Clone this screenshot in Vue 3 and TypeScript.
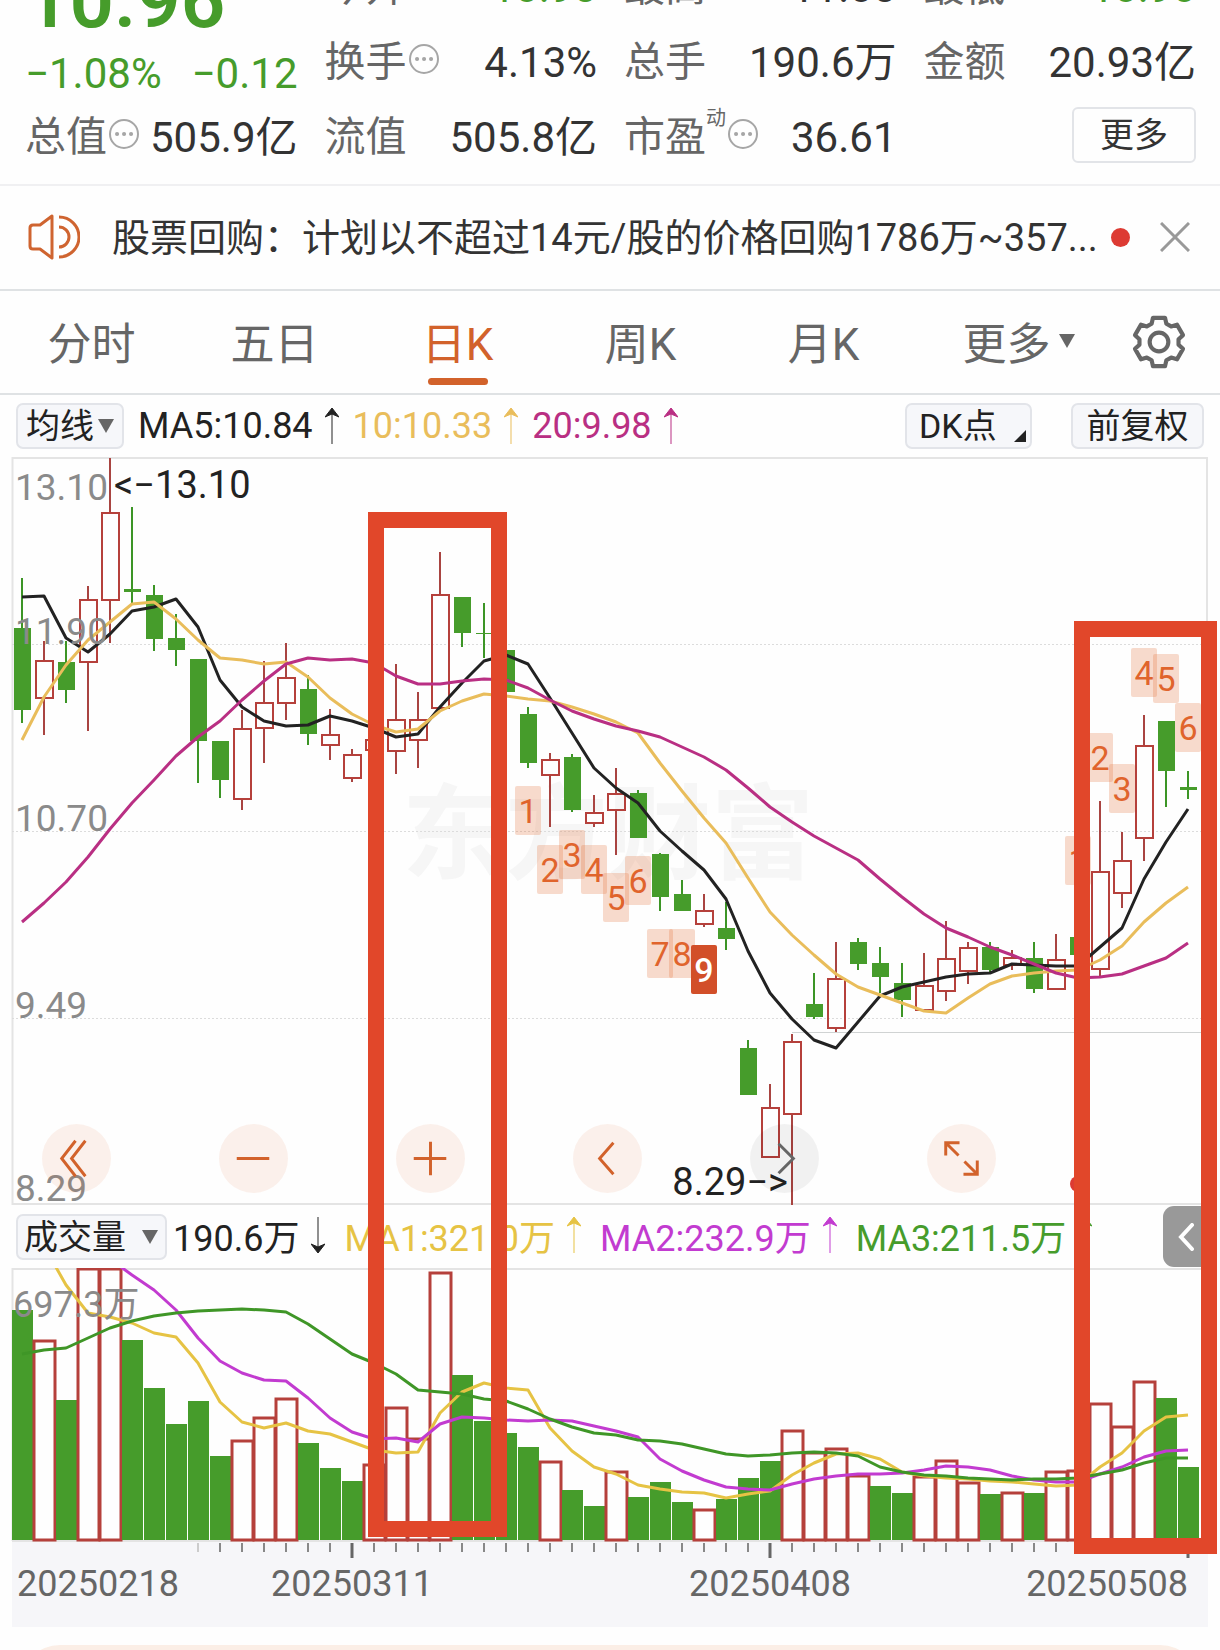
<script setup lang="ts">
import { ref } from 'vue'

type Candle = [kind: 'r' | 'g', high: number, top: number, bottom: number, low: number]

const W = 1220
const STEP = 22
const xAt = (i: number): number => 22 + STEP * i

const candles: Candle[] = [
  ['g', 578, 628, 710, 723], ['r', 641, 661, 698, 735], ['g', 641, 662, 690, 703], ['r', 586, 600, 662, 731],
  ['r', 458, 513, 600, 643], ['g', 507, 589, 592, 603], ['g', 585, 595, 639, 651], ['g', 614, 638, 650, 666],
  ['g', 659, 659, 741, 783], ['g', 741, 741, 780, 798], ['r', 710, 729, 799, 810], ['r', 661, 703, 728, 763],
  ['r', 643, 678, 703, 720], ['g', 675, 689, 734, 745], ['r', 709, 735, 745, 760], ['r', 749, 755, 778, 782],
  ['r', 739, 740, 750, 750], ['r', 664, 720, 751, 774], ['r', 692, 720, 740, 768], ['r', 552, 595, 708, 708],
  ['g', 597, 597, 633, 647], ['g', 603, 633, 634, 658], ['g', 650, 650, 692, 692], ['g', 707, 714, 763, 768],
  ['r', 753, 760, 775, 827], ['g', 754, 757, 810, 812], ['r', 795, 813, 823, 827], ['r', 768, 794, 810, 855],
  ['g', 790, 793, 838, 838], ['g', 853, 854, 897, 911], ['g', 880, 894, 911, 911], ['r', 894, 911, 924, 927],
  ['g', 902, 928, 939, 950], ['g', 1040, 1048, 1095, 1095], ['r', 1084, 1108, 1157, 1157], ['r', 1034, 1042, 1114, 1205],
  ['g', 973, 1004, 1017, 1019], ['r', 942, 979, 1028, 1032], ['g', 938, 942, 964, 970], ['g', 947, 963, 977, 993],
  ['g', 963, 983, 1000, 1017], ['r', 953, 986, 1010, 1010], ['r', 921, 959, 991, 1001], ['r', 942, 948, 971, 984],
  ['g', 942, 947, 970, 973], ['r', 950, 958, 965, 970], ['g', 942, 958, 989, 993], ['r', 934, 960, 989, 989],
  ['g', 937, 937, 955, 955], ['r', 801, 872, 969, 977], ['r', 832, 861, 893, 908], ['r', 715, 746, 838, 861],
  ['g', 721, 721, 771, 807], ['g', 771, 787, 790, 799],
]

const volumeTops: number[] = [
  1310, 1341, 1400, 1269, 1269, 1340, 1388, 1424, 1401, 1456, 1441, 1418, 1399, 1443, 1468, 1481, 1465, 1408,
  1439, 1273, 1375, 1421, 1433, 1447, 1462, 1490, 1506, 1472, 1497, 1482, 1502, 1510, 1499, 1478, 1461, 1431,
  1453, 1449, 1476, 1486, 1493, 1477, 1461, 1483, 1494, 1493, 1493, 1472, 1471, 1404, 1427, 1382, 1398, 1467,
]
// Volume bars are coloured by the day-on-day move, so they can differ from the candle above.
const fallingVolume = new Set([
  0, 2, 5, 6, 7, 8, 9, 13, 14, 15, 20, 21, 22, 23, 25, 26, 28, 29, 30, 32, 33, 34, 39, 40, 44, 46, 52, 53,
])

const ma5 = [
  597, 596, 638, 652, 634, 611, 607, 599, 627, 680, 707, 721, 726, 725, 716, 721, 728, 737, 734, 707, 683, 661,
  655, 664, 698, 733, 768, 788, 803, 831, 851, 870, 899, 951, 993, 1019, 1040, 1048, 1022, 996, 987, 982, 977,
  974, 973, 964, 965, 966, 966, 947, 928, 879, 842, 809,
]
const ma10 = [
  740, 697, 665, 640, 622, 604, 602, 619, 640, 658, 660, 664, 662, 677, 698, 714, 725, 732, 729, 711, 701, 694,
  696, 699, 701, 707, 714, 722, 733, 763, 791, 818, 843, 878, 912, 935, 955, 974, 987, 995, 1003, 1011, 1013,
  998, 984, 976, 973, 971, 970, 960, 946, 922, 903, 887,
]
const ma20 = [
  922, 903, 882, 857, 829, 803, 780, 756, 737, 721, 700, 681, 664, 658, 660, 659, 663, 676, 684, 684, 681, 679,
  680, 688, 700, 711, 719, 726, 731, 737, 747, 757, 770, 788, 807, 822, 836, 848, 860, 879, 897, 914, 928, 937,
  947, 955, 964, 973, 978, 977, 974, 966, 958, 943,
]
const volMa1 = [
  1212, 1246, 1285, 1313, 1317, 1323, 1333, 1337, 1363, 1402, 1422, 1428, 1423, 1431, 1434, 1442, 1450, 1453,
  1452, 1413, 1392, 1383, 1388, 1390, 1428, 1451, 1467, 1474, 1485, 1489, 1492, 1493, 1498, 1494, 1491, 1475,
  1463, 1454, 1453, 1459, 1472, 1476, 1478, 1479, 1481, 1482, 1484, 1486, 1485, 1467, 1453, 1431, 1417, 1415,
]
const volMa2 = [
  1200, 1210, 1220, 1230, 1259, 1275, 1290, 1310, 1338, 1361, 1373, 1380, 1381, 1398, 1418, 1432, 1439, 1438,
  1442, 1424, 1417, 1418, 1420, 1421, 1420, 1421, 1426, 1431, 1437, 1459, 1471, 1480, 1487, 1489, 1490, 1484,
  1479, 1476, 1474, 1474, 1473, 1470, 1466, 1467, 1470, 1476, 1480, 1482, 1482, 1474, 1467, 1457, 1451, 1450,
]
const volMa3 = [
  1354, 1350, 1348, 1338, 1328, 1321, 1316, 1313, 1311, 1310, 1309, 1310, 1312, 1324, 1339, 1354, 1363, 1374,
  1390, 1392, 1394, 1399, 1401, 1409, 1419, 1427, 1433, 1435, 1440, 1441, 1444, 1449, 1454, 1456, 1455, 1453,
  1452, 1453, 1456, 1467, 1472, 1475, 1476, 1478, 1479, 1480, 1479, 1479, 1478, 1474, 1470, 1463, 1458, 1458,
]

const line = (ys: number[]): string => ys.map((y, i) => `${xAt(i)},${y}`).join(' ')

const badges: { i: number; y: number; n: number }[] = [
  { i: 23, y: 786, n: 1 }, { i: 24, y: 845, n: 2 }, { i: 25, y: 830, n: 3 }, { i: 26, y: 845, n: 4 },
  { i: 27, y: 873, n: 5 }, { i: 28, y: 856, n: 6 }, { i: 29, y: 929, n: 7 }, { i: 30, y: 929, n: 8 },
  { i: 31, y: 945, n: 9 }, { i: 48, y: 836, n: 1 }, { i: 49, y: 733, n: 2 }, { i: 50, y: 764, n: 3 },
  { i: 51, y: 648, n: 4 }, { i: 52, y: 654, n: 5 }, { i: 53, y: 703, n: 6 },
]

const ticks = candles.map((_, i) => i).filter((i) => i >= 8)
const isMajor = (i: number): boolean => i === 15 || i === 34 || i === 53

const STAGE_TOP = 457
const STAGE_HEIGHT = 1170
const frames = [
  { left: 368, top: 512, width: 139, height: 1025 },
  { left: 1074, top: 621, width: 143, height: 933 },
]
const frameStyle = (f: (typeof frames)[number]) => ({
  left: `${(f.left / W) * 100}%`,
  top: `${((f.top - STAGE_TOP) / STAGE_HEIGHT) * 100}%`,
  width: `${(f.width / W) * 100}%`,
  height: `${(f.height / STAGE_HEIGHT) * 100}%`,
})

const tabs = ['分时', '五日', '日K', '周K', '月K', '更多']
const active = ref('日K')

const gear = Array.from({ length: 6 }, (_, k) => {
  const base = -90 + 60 * k
  return [[19, -22], [24, -14], [24, 14], [19, 22]]
    .map(([r, a]) => {
      const t = ((base + a) * Math.PI) / 180
      return `${(26 + r * Math.cos(t)).toFixed(1)},${(26 + r * Math.sin(t)).toFixed(1)}`
    })
    .join(' ')
}).join(' ')

const tools = [
  { label: '最左', d: 'M34 17 20 35 34 53M44 17 30 35 44 53', gray: false },
  { label: '缩小', d: 'M18 35H51', gray: false },
  { label: '放大', d: 'M18 35H51M35 18V52', gray: false },
  { label: '左移', d: 'M41 19 27 35 41 51', gray: false },
  { label: '右移', d: 'M29 20 44 35 29 50', gray: true },
  { label: '全屏', d: 'M19 32V19H33M19 19 32 32M38 38 51 51M37 51H51V37', gray: false },
]
</script>

<template>
  <main class="page">
    <header class="quote">
      <section class="summary">
        <strong class="price">10.96</strong>
        <div class="change"><span>−1.08%</span><span>−0.12</span></div>
        <div class="cell">
          <span class="name">总值</span>
          <svg class="info" viewBox="0 0 30 30"><circle cx="15" cy="15" r="14" /><path d="M8 15h.1M15 15h.1M22 15h.1" /></svg>
          <span class="value">505.9亿</span>
        </div>
      </section>
      <section class="column">
        <div class="cell"><span class="name">今开</span><span class="value down">10.98</span></div>
        <div class="cell">
          <span class="name">换手</span>
          <svg class="info" viewBox="0 0 30 30"><circle cx="15" cy="15" r="14" /><path d="M8 15h.1M15 15h.1M22 15h.1" /></svg>
          <span class="value">4.13%</span>
        </div>
        <div class="cell"><span class="name">流值</span><span class="value">505.8亿</span></div>
      </section>
      <section class="column">
        <div class="cell"><span class="name">最高</span><span class="value">11.08</span></div>
        <div class="cell"><span class="name">总手</span><span class="value">190.6万</span></div>
        <div class="cell">
          <span class="name">市盈</span><span class="sup">动</span>
          <svg class="info" viewBox="0 0 30 30"><circle cx="15" cy="15" r="14" /><path d="M8 15h.1M15 15h.1M22 15h.1" /></svg>
          <span class="value">36.61</span>
        </div>
      </section>
      <section class="column">
        <div class="cell"><span class="name">最低</span><span class="value down">10.90</span></div>
        <div class="cell"><span class="name">金额</span><span class="value">20.93亿</span></div>
        <div class="cell last"><button class="more" type="button">更多</button></div>
      </section>
    </header>

    <section class="notice">
      <svg class="speaker" viewBox="0 0 52 46">
        <path d="M24 2 12 11H5Q2 11 2 14V32Q2 35 5 35H12L24 44Z" />
        <path d="M31 13A10 10 0 0 1 31 33M31 3A20 20 0 0 1 31 43" />
      </svg>
      <a class="headline" href="#">股票回购：计划以不超过14元/股的价格回购1786万~357...</a>
      <i class="dot"></i>
      <button class="close" type="button" aria-label="关闭">
        <svg viewBox="0 0 30 30"><path d="M1 1 29 29M29 1 1 29" /></svg>
      </button>
    </section>

    <nav class="tabs">
      <button
        v-for="t in tabs"
        :key="t"
        type="button"
        class="tab"
        :class="{ active: t === active, menu: t === '更多' }"
        @click="active = t"
      >
        {{ t }}<svg v-if="t === '更多'" class="caret" viewBox="0 0 16 14"><path d="M0 0H16L8 14Z" /></svg>
      </button>
      <button class="settings" type="button" aria-label="设置">
        <svg viewBox="0 0 52 52"><polygon :points="gear" /><circle cx="26" cy="26" r="9" /></svg>
      </button>
    </nav>

    <section class="legend averages">
      <button class="chip" type="button">均线<svg class="caret" viewBox="0 0 16 14"><path d="M0 0H16L8 14Z" /></svg></button>
      <span class="entry c-black">MA5:10.84<svg class="arrow" viewBox="0 0 14 36"><path d="M7 36V3" /><path class="head" d="M7 0 14 9 7 6 0 9Z" /></svg></span>
      <span class="entry c-gold">10:10.33<svg class="arrow" viewBox="0 0 14 36"><path d="M7 36V3" /><path class="head" d="M7 0 14 9 7 6 0 9Z" /></svg></span>
      <span class="entry c-plum">20:9.98<svg class="arrow" viewBox="0 0 14 36"><path d="M7 36V3" /><path class="head" d="M7 0 14 9 7 6 0 9Z" /></svg></span>
      <span class="chips">
        <button class="chip dk" type="button">DK点<svg class="corner" viewBox="0 0 12 12"><path d="M12 0V12H0Z" /></svg></button>
        <button class="chip adjust" type="button">前复权</button>
      </span>
    </section>

    <section class="stage">
      <div class="price-panel">
        <svg class="plot" viewBox="0 457 1220 748" role="img" aria-label="日K线图">
          <text class="watermark" x="402" y="871">东方财富</text>
          <g class="border">
            <path d="M12 458H1208M12 1204H1208" />
            <path d="M12.5 457V1205M1207 457V1205" />
          </g>
          <path class="grid" d="M12 644.5H1207M12 831.5H1207M12 1018.5H1207" />
          <path class="low-line" d="M792 1032.5H1207" />
          <g v-for="(c, i) in candles" :key="i" :class="c[0] === 'r' ? 'rise' : 'fall'">
            <path class="wick" :d="`M${xAt(i)} ${c[1]}V${c[2]}M${xAt(i)} ${c[3]}V${c[4]}`" />
            <rect :x="xAt(i) - 8" :y="c[2]" width="17" :height="c[3] - c[2]" />
          </g>
          <polyline class="ma s-black" :points="line(ma5)" />
          <polyline class="ma s-gold" :points="line(ma10)" />
          <polyline class="ma s-plum" :points="line(ma20)" />
          <g v-for="b in badges" :key="`${b.i}`" class="badge" :class="{ solid: b.n === 9 }">
            <rect :x="xAt(b.i) - 13" :y="b.y" width="26" height="49" rx="2" />
            <text :x="xAt(b.i)" :y="b.y + 37">{{ b.n }}</text>
          </g>
          <circle class="mark" cx="1078" cy="1184" r="8" />
          <g class="scale">
            <text x="15" y="500">13.10</text>
            <text x="15" y="644">11.90</text>
            <text x="15" y="831">10.70</text>
            <text x="15" y="1018">9.49</text>
            <text x="15" y="1201">8.29</text>
          </g>
          <text class="extreme" x="114" y="498">&lt;−13.10</text>
          <text class="extreme" x="788" y="1195" text-anchor="end">8.29−&gt;</text>
        </svg>
        <div class="tools">
          <button v-for="t in tools" :key="t.label" type="button" class="tool" :class="{ gray: t.gray }" :aria-label="t.label">
            <svg viewBox="0 0 70 70"><path :d="t.d" /></svg>
          </button>
        </div>
      </div>

      <div class="legend volume-legend">
        <button class="chip wide" type="button">成交量<svg class="caret" viewBox="0 0 16 14"><path d="M0 0H16L8 14Z" /></svg></button>
        <span class="entry c-black">190.6万<svg class="arrow" viewBox="0 0 14 36"><path d="M7 0V33" /><path class="head" d="M7 36 14 27 7 30 0 27Z" /></svg></span>
        <span class="entry c-yellow">MA1:321.0万<svg class="arrow" viewBox="0 0 14 36"><path d="M7 36V3" /><path class="head" d="M7 0 14 9 7 6 0 9Z" /></svg></span>
        <span class="entry c-violet">MA2:232.9万<svg class="arrow" viewBox="0 0 14 36"><path d="M7 36V3" /><path class="head" d="M7 0 14 9 7 6 0 9Z" /></svg></span>
        <span class="entry c-green">MA3:211.5万<svg class="arrow" viewBox="0 0 14 36"><path d="M7 36V3" /><path class="head" d="M7 0 14 9 7 6 0 9Z" /></svg></span>
        <button class="collapse" type="button" aria-label="展开">
          <svg viewBox="0 0 16 28"><path d="M14 2 3 14 14 26" /></svg>
        </button>
      </div>

      <svg class="plot" viewBox="0 1268 1220 359" role="img" aria-label="成交量图">
        <rect class="axis-bg" x="12" y="1541" width="1196" height="86" />
        <g class="border">
          <path d="M12 1269H1208M12 1541H1208" />
          <path d="M12.5 1268V1541M1207 1268V1541" />
        </g>
        <g v-for="(top, i) in volumeTops" :key="i" class="bar" :class="fallingVolume.has(i) ? 'fall' : 'rise'">
          <rect :x="xAt(i) - 10" :y="top" width="21" :height="1540 - top" />
        </g>
        <polyline class="ma s-yellow" :points="line(volMa1)" />
        <polyline class="ma s-violet" :points="line(volMa2)" />
        <polyline class="ma s-green" :points="line(volMa3)" />
        <text class="volume-max" x="13" y="1317">697.3万</text>
        <path
          v-for="i in ticks"
          :key="`t${i}`"
          class="tick"
          :class="{ major: isMajor(i), faint: i === 8 }"
          :d="`M${xAt(i)} 1543V${isMajor(i) ? 1558 : 1552}`"
        />
        <g class="dates">
          <text x="17" y="1596">20250218</text>
          <text x="352" y="1596" text-anchor="middle">20250311</text>
          <text x="770" y="1596" text-anchor="middle">20250408</text>
          <text x="1188" y="1596" text-anchor="end">20250508</text>
        </g>
      </svg>

      <div v-for="f in frames" :key="f.left" class="frame" :style="frameStyle(f)"></div>
    </section>

    <div class="peek"><div class="peek-card"></div></div>
  </main>
</template>

<style>
body {
  margin: 0;
  background: #fefefe;
}
</style>

<style scoped>
.page {
  overflow: hidden;
  background: #fefefe;
  color: #333;
  font-family: Roboto, "Noto Sans CJK SC", sans-serif;
}
button {
  margin: 0;
  padding: 0;
  border: 0;
  background: none;
  color: inherit;
  font: inherit;
}
svg {
  flex: none;
  fill: none;
}

/* quote header */
.quote {
  display: grid;
  grid-template-columns: repeat(4, 1fr);
  column-gap: 27px;
  margin-top: -50px;
  padding: 0 24px 9px 25px;
  border-bottom: 2px solid #f0f0f2;
}
.cell {
  display: flex;
  align-items: center;
  height: 75px;
  font-size: 42px;
  line-height: 75px;
  white-space: nowrap;
}
.name {
  color: #666;
  font-size: 41px;
}
.value {
  margin-left: auto;
}
.info {
  width: 30px;
  height: 30px;
  margin: 0 0 8px 2px;
  stroke: #a6a6a6;
  stroke-width: 2;
}
.info path {
  stroke-width: 4;
  stroke-linecap: round;
}
.sup {
  align-self: flex-start;
  color: #666;
  font-size: 20px;
  line-height: 36px;
}
.price {
  display: block;
  height: 86px;
  color: #469c2b;
  font-size: 78px;
  font-weight: 600;
  line-height: 102px;
}
.change {
  display: flex;
  justify-content: space-between;
  height: 64px;
  color: #469c2b;
  font-size: 42px;
  line-height: 75px;
}
.down {
  color: #469c2b;
}
.last {
  align-items: flex-start;
  justify-content: flex-end;
}
.more {
  box-sizing: border-box;
  width: 124px;
  height: 56px;
  margin-top: 7px;
  border: 2px solid #e2e4e8;
  border-radius: 6px;
  font-size: 34px;
  line-height: 50px;
}

/* notice */
.notice {
  display: flex;
  align-items: center;
  height: 103px;
  padding: 0 30px 0 28px;
  border-bottom: 2px solid #dfe2e4;
}
.speaker {
  width: 52px;
  height: 46px;
  margin-bottom: 2px;
  stroke: #cf6430;
  stroke-width: 3;
  stroke-linejoin: round;
}
.headline {
  flex: 1;
  margin-left: 32px;
  overflow: hidden;
  color: #333;
  font-size: 38px;
  line-height: 60px;
  text-decoration: none;
  white-space: nowrap;
}
.dot {
  width: 19px;
  height: 19px;
  border-radius: 50%;
  background: #dd3b33;
}
.close {
  width: 30px;
  height: 30px;
  margin: 0 0 2px 30px;
}
.close svg {
  display: block;
  stroke: #999;
  stroke-width: 3;
}

/* period tabs */
.tabs {
  display: flex;
  height: 102px;
  border-bottom: 2px solid #dfe2e4;
  color: #666;
}
.tab {
  position: relative;
  display: flex;
  flex: none;
  box-sizing: border-box;
  align-items: center;
  justify-content: center;
  width: 15%;
  padding-bottom: 3px;
  font-size: 44px;
}
.tab.menu {
  padding-left: 24px;
}
.tab.active {
  color: #d2622b;
}
.tab.active::after {
  position: absolute;
  bottom: 8px;
  left: calc(50% - 30px);
  width: 60px;
  height: 7px;
  border-radius: 4px;
  background: #d2622b;
  content: "";
}
.caret {
  width: 16px;
  height: 14px;
  margin-left: 4px;
  fill: #666;
}
.tab .caret {
  margin-left: 8px;
}
.settings {
  display: flex;
  flex: 1;
  align-items: center;
  justify-content: center;
}
.settings svg {
  width: 54px;
  height: 54px;
  stroke: #666;
  stroke-width: 4;
  stroke-linejoin: round;
}

/* legends */
.legend {
  display: flex;
  align-items: center;
  height: 63px;
  padding: 0 16px;
  font-size: 36px;
  white-space: nowrap;
}
.averages {
  height: 62px;
}
.chip {
  display: flex;
  box-sizing: border-box;
  align-items: center;
  justify-content: center;
  width: 108px;
  height: 46px;
  border: 2px solid #e2e4e9;
  border-radius: 7px;
  background: #f6f7fa;
  color: #222;
  font-size: 34px;
  line-height: 42px;
}
.chip.wide {
  justify-content: space-between;
  width: 151px;
  padding: 0 7px 0 6px;
}
.chip.dk {
  position: relative;
  justify-content: flex-start;
  width: 127px;
  padding-left: 12px;
}
.chip.adjust {
  width: 133px;
}
.corner {
  position: absolute;
  right: 4px;
  bottom: 5px;
  width: 12px;
  height: 12px;
  fill: #222;
}
.chips {
  display: flex;
  gap: 39px;
  margin-left: auto;
}
.entry {
  display: flex;
  align-items: center;
  margin-right: 14px;
}
.chip + .entry {
  margin-left: 14px;
}
.arrow {
  width: 14px;
  height: 36px;
  margin-left: 12px;
  stroke: currentColor;
  stroke-width: 1;
}
.arrow .head {
  fill: currentColor;
}
.volume-legend {
  position: relative;
}
.volume-legend .chip + .entry {
  margin-left: 6px;
}
.volume-legend .entry {
  margin-right: 19px;
  padding-bottom: 4px;
}
.c-black { color: #222; }
.c-gold { color: #e9bd5b; }
.c-plum { color: #b92f83; }
.c-yellow { color: #e6c344; }
.c-violet { color: #c23bd0; }
.c-green { color: #469c2b; }
.collapse {
  position: absolute;
  top: 1px;
  right: 12px;
  display: flex;
  align-items: center;
  width: 45px;
  height: 61px;
  padding-left: 15px;
  border-radius: 11px 0 0 11px;
  background: #999;
}
.collapse svg {
  width: 16px;
  height: 28px;
  stroke: #fff;
  stroke-width: 4;
  stroke-linecap: round;
}

/* charts */
.stage,
.price-panel {
  position: relative;
}
.plot {
  display: block;
  width: 100%;
  height: auto;
}
.border path {
  stroke: #e4e4e4;
  stroke-width: 2;
}
.grid {
  stroke: #dcdcdc;
  stroke-width: 1;
  stroke-dasharray: 2 2;
}
.low-line {
  stroke: #d0d3d3;
}
.watermark {
  fill: #f6f6f6;
  font-size: 103px;
  font-weight: 700;
}
.rise rect {
  stroke: #b5403b;
  stroke-width: 2;
}
.rise .wick {
  stroke: #a94441;
  stroke-width: 2;
}
.fall rect {
  fill: #469c2b;
}
.fall .wick {
  stroke: #3c9526;
  stroke-width: 2;
}
.bar.rise rect {
  stroke-width: 3;
}
.ma {
  stroke-width: 3;
  stroke-linejoin: round;
}
.s-black { stroke: #222; }
.s-gold { stroke: #e9bd5b; }
.s-plum { stroke: #b92f83; }
.s-yellow { stroke: #e6c344; }
.s-violet { stroke: #c23bd0; }
.s-green { stroke: #3f9627; }
.badge rect {
  fill: #e2692d;
  fill-opacity: 0.24;
}
.badge text {
  fill: #e0642c;
  font-size: 34px;
  text-anchor: middle;
}
.badge.solid rect {
  fill: #d24f29;
  fill-opacity: 1;
}
.badge.solid text {
  fill: #fff;
  font-weight: 500;
}
.mark {
  fill: #dd3b33;
}
.scale text {
  fill: #8a8a8a;
  font-size: 37px;
}
.extreme {
  fill: #222;
  font-size: 38px;
}
.volume-max {
  fill: #8a8a8a;
  font-size: 36px;
}
.axis-bg {
  fill: #f6f6f9;
}
.tick {
  stroke: #888;
  stroke-width: 2;
}
.tick.major {
  stroke: #666;
  stroke-width: 3;
}
.tick.faint {
  stroke: #ccc;
}
.dates text {
  fill: #666;
  font-size: 36px;
}

/* chart tools */
.tools {
  position: absolute;
  right: 0;
  bottom: 12px;
  left: 0;
  display: flex;
  gap: 108px;
  padding-left: 42px;
}
.tool {
  width: 69px;
  height: 69px;
  border-radius: 50%;
  background: rgba(226, 105, 45, 0.09);
}
.tool.gray {
  background: rgba(0, 0, 0, 0.05);
}
.tool svg {
  display: block;
  stroke: #d2622b;
  stroke-width: 3;
}
.tool.gray svg {
  stroke: #666;
}
.frame {
  position: absolute;
  box-sizing: border-box;
  border: 16px solid #e1472a;
  pointer-events: none;
}

.peek {
  height: 5px;
  margin-top: 18px;
  padding: 0 20px;
  overflow: hidden;
}
.peek-card {
  height: 80px;
  border-radius: 40px;
  background: #fbeee6;
}
</style>
